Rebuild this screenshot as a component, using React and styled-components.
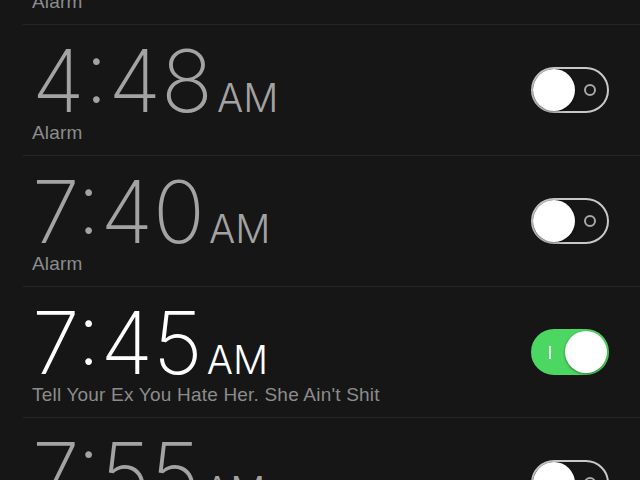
import React from 'react';
import styled, { createGlobalStyle } from 'styled-components';

const GlobalStyle = createGlobalStyle`
  html, body {
    margin: 0;
    padding: 0;
    background: #161616;
    overflow: hidden;
  }
  body {
    font-family: Inter, "Liberation Sans", sans-serif;
  }
`;

const alarms = [
  { time: '4:30', label: 'Alarm', on: false },
  { time: '4:48', label: 'Alarm', on: false },
  { time: '7:40', label: 'Alarm', on: false },
  { time: '7:45', label: 'Tell Your Ex You Hate Her. She Ain\'t Shit', on: true },
  { time: '7:55', label: 'Alarm', on: false },
];

const App = () => {
  return (
    <>
      <GlobalStyle />
      <Screen>
        <List>
          {alarms.map((alarm, i) => (
            <Row key={i}>
              <Info>
                <Time on={alarm.on}>
                  <Digits>{alarm.time}</Digits>
                  <Meridiem>AM</Meridiem>
                </Time>
                <Label>{alarm.label}</Label>
              </Info>
              <Toggle on={alarm.on}>
                {alarm.on ? <Toggle.Bar /> : <Toggle.Ring />}
                <Toggle.Thumb on={alarm.on} />
              </Toggle>
            </Row>
          ))}
        </List>
      </Screen>
    </>
  );
};

const Screen = styled.div`
  width: 640px;
  height: 480px;
  overflow: hidden;
  background: #161616;
`;

// list is scrolled: first row is mostly above the fold
const List = styled.div`
  margin-top: -106px;
  padding-left: 23px;
`;

const Row = styled.div`
  height: 131px;
  box-sizing: border-box;
  border-bottom: 1px solid #262626;
  display: flex;
  align-items: center;
  justify-content: space-between;
  padding: 0 31px 0 9px;
`;

const Info = styled.div`
  display: flex;
  flex-direction: column;
`;

const Time = styled.div`
  display: flex;
  align-items: baseline;
  color: ${(p) => (p.on ? '#ffffff' : '#a3a3a3')};
  height: 84px;
  padding-top: 3px;
`;

const Digits = styled.span`
  font-size: 86px;
  font-weight: 200;
  line-height: 84px;
  letter-spacing: 0px;
`;

const Meridiem = styled.span`
  font-size: 39px;
  font-weight: 300;
  margin-left: 4px;
`;

const Label = styled.div`
  font-size: 19px;
  letter-spacing: 0.2px;
  color: #8c8c8c;
  margin-top: -1px;
  font-family: "Liberation Sans", Arial, sans-serif;
`;

const Toggle = styled.div`
  position: relative;
  width: 78px;
  height: 46px;
  border-radius: 23px;
  box-sizing: border-box;
  background: ${(p) => (p.on ? '#4cd763' : '#161616')};
  border: 2px solid ${(p) => (p.on ? '#4cd763' : '#c8c8c8')};
`;

Toggle.Thumb = styled.div`
  position: absolute;
  top: 0;
  left: ${(p) => (p.on ? '32px' : '0')};
  width: 42px;
  height: 42px;
  border-radius: 50%;
  background: #ffffff;
  box-shadow: 0 1px 3px rgba(0, 0, 0, 0.4);
`;

Toggle.Ring = styled.div`
  position: absolute;
  right: 11px;
  top: 15px;
  width: 12px;
  height: 12px;
  box-sizing: border-box;
  border-radius: 50%;
  border: 2px solid #a8a8a8;
`;

Toggle.Bar = styled.div`
  position: absolute;
  left: 16px;
  top: 15px;
  width: 2px;
  height: 13px;
  background: #e8ffe8;
`;

export default App;
